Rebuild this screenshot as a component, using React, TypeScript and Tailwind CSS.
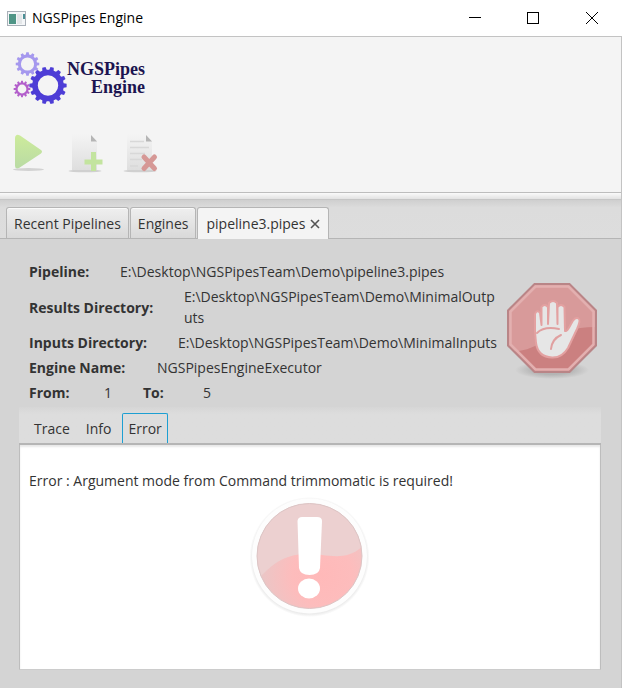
import type { ReactNode } from "react";

function gearPath(cx: number, cy: number, outer: number, root: number, hole: number, teeth: number) {
  const step = (Math.PI * 2) / teeth;
  const at = (r: number, a: number) => `${(cx + r * Math.cos(a)).toFixed(2)} ${(cy + r * Math.sin(a)).toFixed(2)}`;
  let d = "";
  for (let i = 0; i < teeth; i++) {
    const a = i * step;
    d += `${i === 0 ? "M" : "L"}${at(root, a - step * 0.32)}L${at(outer, a - step * 0.2)}L${at(outer, a + step * 0.2)}L${at(root, a + step * 0.32)}`;
  }
  return `${d}ZM${cx - hole} ${cy}a${hole} ${hole} 0 1 0 ${hole * 2} 0a${hole} ${hole} 0 1 0 ${-hole * 2} 0Z`;
}

function Logo() {
  return (
    <div className="flex h-[54px] items-center">
      <svg width="54" height="54" viewBox="0 0 54 54" aria-hidden="true" fillRule="evenodd">
        <path d={gearPath(14.5, 13, 11.8, 9.6, 6.6, 12)} fill="#a598ee" />
        <path d={gearPath(9, 38, 8.4, 6.6, 4.4, 12)} fill="#b35fcb" />
        <path d={gearPath(35, 34.5, 18.7, 15.8, 10.2, 14)} fill="#4d3dd6" />
      </svg>
      <div className="text-right font-['Liberation_Serif',serif] text-lg leading-[18px] font-bold text-[#1c1450]">
        <div>NGSPipes</div>
        <div>Engine</div>
      </div>
    </div>
  );
}

function PlayIcon() {
  return (
    <svg width="32" height="40" viewBox="0 0 32 40" aria-hidden="true">
      <defs>
        <linearGradient id="play" x2="0" y2="1">
          <stop stopColor="#cdeb9b" />
          <stop offset="1" stopColor="#b9dba4" />
        </linearGradient>
      </defs>
      <ellipse cx="15.5" cy="36.500" rx="15.5" ry="1.5" fill="#d2d2d2" />
      <path d="M3 2.5 Q4 1 7 2.5 L28 17 Q30 18.5 28 20.5 L6 35 Q2 36.500 2 33 V5 Q2 3 3 2.5Z" fill="url(#play)" />
    </svg>
  );
}

function PageShape({ id }: { id: string }) {
  return (
    <>
      <defs>
        <linearGradient id={id} x2="0" y2="1">
          <stop stopColor="#f4f4f4" />
          <stop offset="1" stopColor="#dedede" />
        </linearGradient>
      </defs>
      <ellipse cx="17" cy="38" rx="16.5" ry="1.3" fill="#d0d0d0" />
      <path d="M4 1 H23 L29 8 V37 H4Z" fill={`url(#${id})`} />
      <path d="M23 2 L29 8.5 H23Z" fill="#b5b5b5" />
    </>
  );
}

function AddPageIcon() {
  return (
    <svg width="36" height="40" viewBox="0 0 36 40" aria-hidden="true">
      <PageShape id="page-add" />
      <path d="M23 19 h5 v7.500 h6.500 v5 h-6.500 v6.500 h-5 v-6.500 h-6.500 v-5 h6.500Z" fill="#c3e49f" />
    </svg>
  );
}

function RemovePageIcon() {
  return (
    <svg width="36" height="40" viewBox="0 0 36 40" aria-hidden="true">
      <PageShape id="page-remove" />
      <path d="M7 8.500 H21 M7 14.500 H26 M7 20.500 H22 M7 26.500 H19 M7 33 H15" stroke="#d8d8d8" strokeWidth="1.500" />
      <path d="M21 24 L31.500 35.500 M31.500 24 L21 35.500" stroke="#d69896" strokeWidth="5" strokeLinecap="round" />
    </svg>
  );
}

function StopIcon() {
  return (
    <svg width="92" height="100" viewBox="0 0 92 100" role="img" aria-label="Stopped" className="shrink-0">
      <defs>
        <radialGradient id="stop-shadow">
          <stop offset="0.500" stopColor="#b4b4b4" />
          <stop offset="1" stopColor="#d4d4d4" />
        </radialGradient>
        <clipPath id="stop-clip">
          <path d="M28 2 H64 L90 28 V64 L64 90 H28 L2 64 V28Z" />
        </clipPath>
      </defs>
      <ellipse cx="46" cy="88" rx="37" ry="9" fill="url(#stop-shadow)" />
      <g clipPath="url(#stop-clip)">
        <rect width="92" height="92" fill="#d89a9a" />
        <path d="M0 69 C35 73 42 44 92 45 V92 H0Z" fill="#cb8080" />
      </g>
      <path d="M28.500 2 H63.500 L90 28.500 V63.500 L63.500 90 H28.500 L2 63.500 V28.500Z" fill="none" stroke="#b98587" strokeWidth="2" />
      <path d="M29.500 4.500 H62.500 L87.500 29.500 V62.500 L62.500 87.500 H29.500 L4.500 62.500 V29.500Z" fill="none" stroke="#e3b0b0" strokeWidth="2.500" />
      <path
        d="M29 50 L29 32 Q31 27 34 31 L35.500 43 V25 Q38.500 21 42 25 V42 L43 21 Q47 17 51 21 L51.500 42 V25 Q55 21 58.500 25 L59 49 Q61 50 65 42 Q69 34 72.500 36.500 Q75 38 71 47 L62 66 Q56 76 46 75.500 Q32 75 30 61Z"
        fill="#e6e6e6"
        stroke="#e3a1a1"
        strokeWidth="2"
        strokeLinejoin="round"
      />
      <path d="M31 51 Q38 44 53 47 M55 53 Q46 57 45 67" fill="none" stroke="#e0a0a0" strokeWidth="2" strokeLinecap="round" />
    </svg>
  );
}

function ErrorIcon() {
  return (
    <svg width="120" height="120" viewBox="0 0 120 120" role="img" aria-label="Error">
      <defs>
        <radialGradient id="ring">
          <stop offset="0.950" stopColor="#ececec" />
          <stop offset="1" stopColor="#ffffff" />
        </radialGradient>
        <radialGradient id="glow" cx="0.600" cy="0.650" r="0.500">
          <stop stopColor="#ffb9b9" />
          <stop offset="0.500" stopColor="#fdbcbc" />
          <stop offset="1" stopColor="#ebc6c6" />
        </radialGradient>
        <clipPath id="disc">
          <circle cx="59.500" cy="59" r="52.500" />
        </clipPath>
      </defs>
      <circle cx="59.500" cy="60" r="60" fill="url(#ring)" />
      <circle cx="59.500" cy="59" r="57.500" fill="#fdfdfd" />
      <g clipPath="url(#disc)">
        <rect width="120" height="120" fill="url(#glow)" />
        <path d="M0 0 H120 V41 C104 62 89 60 72 58 C44 54 28 61 12 78 L0 90Z" fill="#ecd0d0" />
      </g>
      <circle cx="59.500" cy="59" r="52.500" fill="none" stroke="#dcc5c5" />
      <path d="M47.500 24 Q48 20 52 20 H67 Q72 20 72 24 L70 71 Q69 78 59.500 78 Q50 78 49 71Z" fill="#fff" />
      <ellipse cx="59" cy="91.500" rx="11" ry="10" fill="#fff" />
    </svg>
  );
}

function TitleBar() {
  return (
    <header className="flex h-[37px] items-center border-b border-[#c3c3c3] bg-white pl-[7px] text-black">
      <svg width="19" height="15" viewBox="0 0 19 15" aria-hidden="true" className="mr-1.5">
        <rect x="0.500" y="0.500" width="18" height="14" fill="#f4f6f8" stroke="#a9b0b8" />
        <rect x="2" y="3" width="7" height="10" fill="#4f9586" />
        <rect x="10" y="3" width="5" height="10" fill="#e3e6e8" />
        <rect x="16" y="3" width="2" height="5" fill="#4c8f95" />
      </svg>
      <h1 className="flex-1 pb-px text-sm">NGSPipes Engine</h1>
      <button aria-label="Minimize" className="flex h-full w-[58px] items-center justify-center">
        <svg width="12" height="12" shapeRendering="crispEdges"><path d="M0 5.500 H12" stroke="#000" /></svg>
      </button>
      <button aria-label="Maximize" className="flex h-full w-[58px] items-center justify-center">
        <svg width="12" height="12" shapeRendering="crispEdges"><rect x="0.500" y="0.500" width="11" height="11" fill="none" stroke="#000" /></svg>
      </button>
      <button aria-label="Close" className="flex h-full w-[60px] items-center justify-center">
        <svg width="12" height="12"><path d="M0 0 L12 12 M12 0 L0 12" stroke="#000" /></svg>
      </button>
    </header>
  );
}

function Tab({ children, selected = false }: { children: ReactNode; selected?: boolean }) {
  return (
    <button
      role="tab"
      aria-selected={selected}
      className={
        selected
          ? "-mb-px flex h-8 items-center gap-[5px] rounded-t-[3px] border border-b-0 border-[#b5b5b5] bg-[#f4f4f4] px-2"
          : "flex h-[31px] items-center rounded-t-[3px] border border-b-0 border-[#b5b5b5] bg-linear-to-b from-[#efefef] to-[#d9d9d9] px-[7px] inset-shadow-[0_1px_0_#fafafa]"
      }
    >
      {children}
    </button>
  );
}

function Field({ label, width, children }: { label: string; width: string; children: ReactNode }) {
  return (
    <div className="flex items-center">
      <dt className={`shrink-0 font-bold whitespace-nowrap ${width}`}>{label}</dt>
      <dd className="min-w-0 break-all">{children}</dd>
    </div>
  );
}

export default function App() {
  return (
    <div className="flex min-h-screen flex-col bg-[#d4d4d4] font-['Open_Sans','Noto_Sans',sans-serif] text-sm leading-[21px] text-[#333333]">
      <TitleBar />
      <div className="flex flex-1 flex-col border-r border-[#c3c3c3]">
        <div className="h-[155px] bg-[#f4f4f4] pt-[14px] pl-[13px]">
          <Logo />
          <div className="flex gap-[19px] pt-7">
            <button aria-label="Run pipeline" className="mr-1"><PlayIcon /></button>
            <button aria-label="Add pipeline"><AddPageIcon /></button>
            <button aria-label="Remove pipeline"><RemovePageIcon /></button>
          </div>
        </div>
        <div className="h-2 border-y border-t-[#bdbdbd] border-b-[#c6c6c6] bg-linear-to-b from-[#fafafa] to-[#e2e2e2]" />
        <div role="tablist" className="flex h-[39px] items-end gap-px border-b border-[#b5b5b5] bg-linear-to-b from-[#cfcfcf] via-[#dcdcdc] via-20% to-[#dddddd] pl-[6px]">
          <Tab>Recent Pipelines</Tab>
          <Tab>Engines</Tab>
          <Tab selected>
            pipeline3.pipes
            <svg width="10" height="10" aria-hidden="true"><path d="M1 1 L9 9 M9 1 L1 9" stroke="#555" strokeWidth="1.600" /></svg>
          </Tab>
        </div>
        <main className="flex flex-1 flex-col pt-[22px] pr-5 pb-[18px] pl-[19px]">
          <div className="flex items-center justify-between pr-[3px] pb-1 pl-[10px]">
            <dl className="flex w-[472px] min-w-0 flex-col gap-1">
              <Field label="Pipeline:" width="w-[91px]">E:\Desktop\NGSPipesTeam\Demo\pipeline3.pipes</Field>
              <Field label="Results Directory:" width="w-[155px]">E:\Desktop\NGSPipesTeam\Demo\MinimalOutputs</Field>
              <Field label="Inputs Directory:" width="w-[149px]">E:\Desktop\NGSPipesTeam\Demo\MinimalInputs</Field>
              <Field label="Engine Name:" width="w-[128px]">NGSPipesEngineExecutor</Field>
              <div className="flex">
                <Field label="From:" width="w-[75px]">1</Field>
                <div className="pl-[31px]">
                  <Field label="To:" width="w-[60px]">5</Field>
                </div>
              </div>
            </dl>
            <StopIcon />
          </div>
          <section className="flex flex-1 flex-col">
            <div role="tablist" className="flex h-[38px] items-end border-b-2 border-[#b5b5b5] bg-linear-to-b from-[#d6d6d6] to-[#dddddd] to-20% pl-[10px]">
              <button role="tab" aria-selected="false" className="h-[30px] px-[5px]">Trace</button>
              <button role="tab" aria-selected="false" className="h-[30px] px-[11px]">Info</button>
              <button role="tab" aria-selected="true" className="h-[30px] rounded-t-[2px] border border-b-0 border-[#1d9fd2] px-[5px]">Error</button>
            </div>
            <div role="tabpanel" className="flex-1 border-x border-b border-x-[#bdbdbd] border-b-[#cccccc] bg-white px-[9px] pt-[25px] inset-shadow-[0_2px_2px_#e8e8e8]">
              <p>Error : Argument mode from Command trimmomatic is required!</p>
              <div className="flex justify-center pt-[6px]"><ErrorIcon /></div>
            </div>
          </section>
        </main>
      </div>
    </div>
  );
}
